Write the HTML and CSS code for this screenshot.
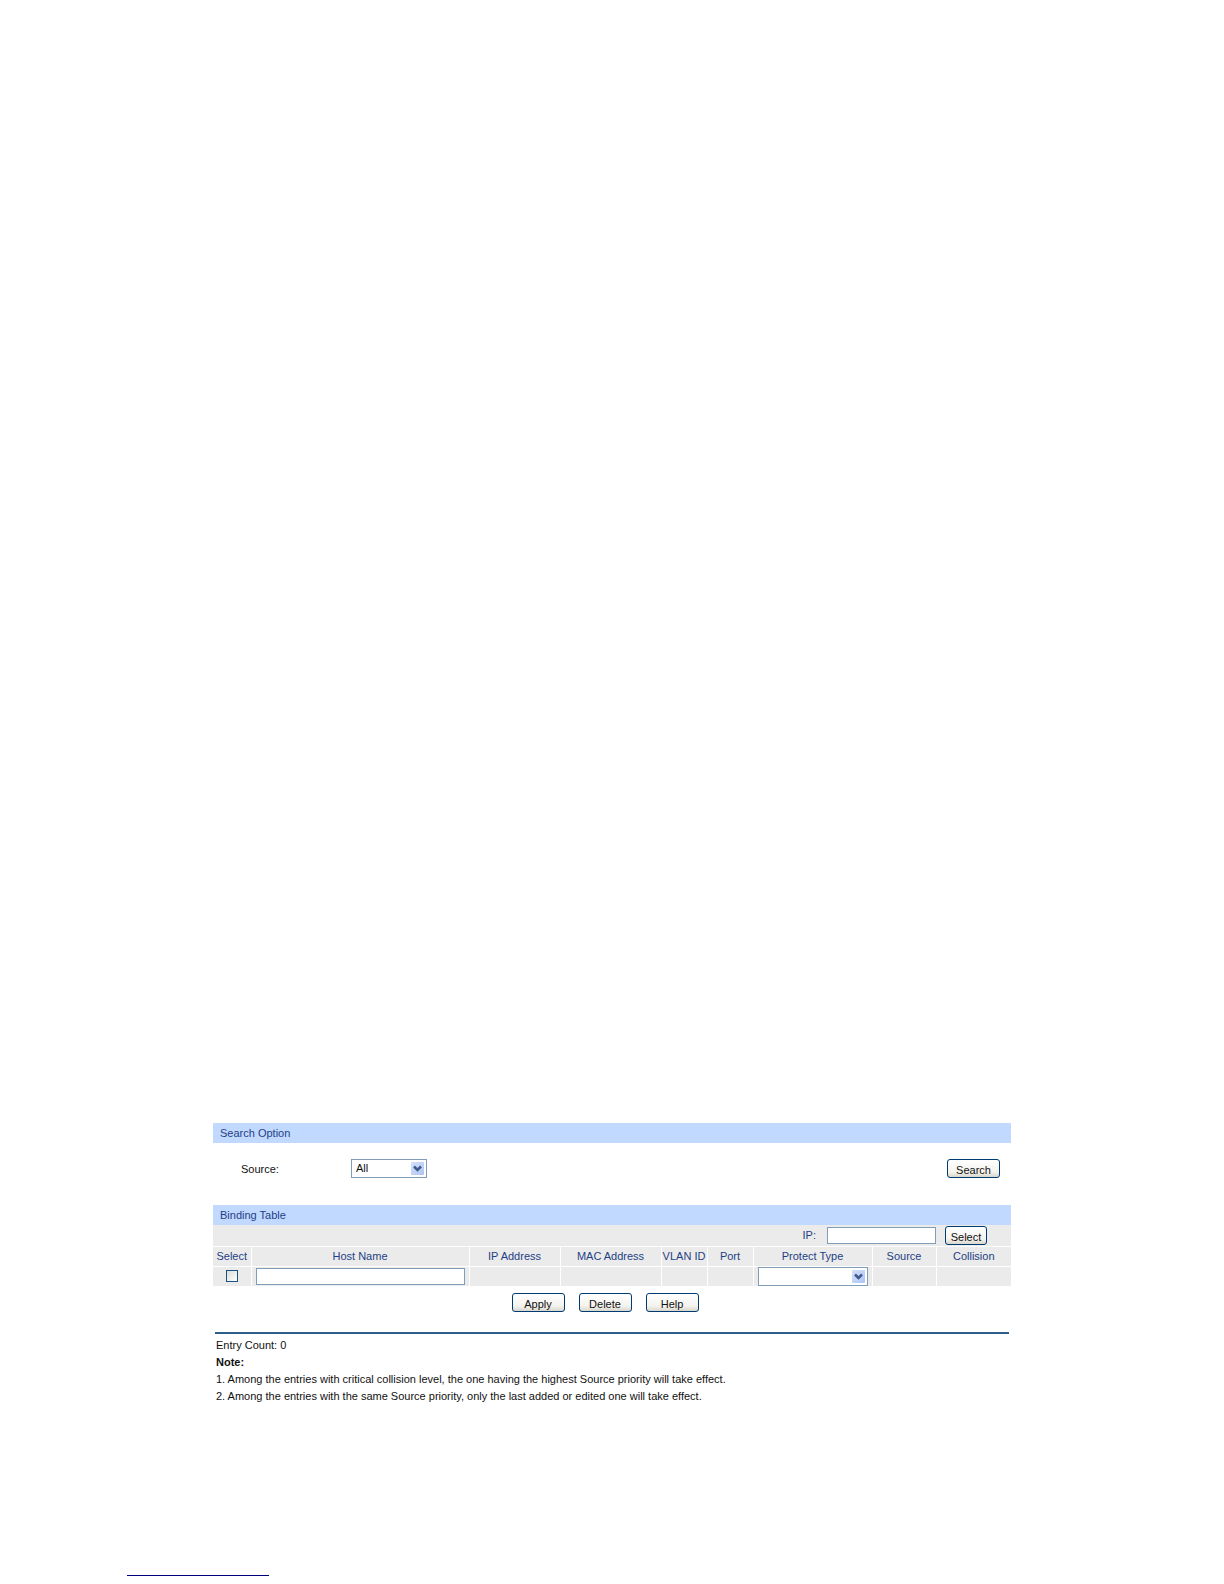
FILE: index.html
```
<!DOCTYPE html>
<html lang="en">

<head>
  <meta charset="UTF-8">
  <meta name="viewport" content="width=device-width, initial-scale=1.0">
  <title>Binding Table</title>
  <link rel="stylesheet" href="styles.css">
</head>

<body>
  <main class="container">
    <!-- Search Option -->
    <form class="search">
      <h2 class="bar">Search Option</h2>
      <div class="search-row">
        <label class="search-label" for="source">Source:</label>
        <span class="select-box source-box">
          <select id="source">
            <option>All</option>
          </select>
          <svg class="arrow" viewBox="0 0 13 13" aria-hidden="true"><path d="M3 4.500l3.500 3.500L10 4.500" /></svg>
        </span>
        <button class="btn search-btn" type="button">Search</button>
      </div>
    </form>

    <!-- Binding Table -->
    <form class="binding">
      <h2 class="bar">Binding Table</h2>
      <div class="ip-row">
        <label for="ip">IP:</label>
        <input class="text-input ip-input" type="text" id="ip">
        <button class="btn select-btn" type="button">Select</button>
      </div>
      <table class="entries">
        <colgroup>
          <col class="col-select">
          <col>
          <col class="col-ip">
          <col class="col-mac">
          <col class="col-small">
          <col class="col-small">
          <col class="col-protect">
          <col class="col-source">
          <col class="col-collision">
        </colgroup>
        <thead>
          <tr>
            <th>Select</th>
            <th>Host Name</th>
            <th>IP Address</th>
            <th>MAC Address</th>
            <th>VLAN ID</th>
            <th>Port</th>
            <th>Protect Type</th>
            <th>Source</th>
            <th>Collision</th>
          </tr>
        </thead>
        <tbody>
          <tr>
            <td><input class="check" type="checkbox" aria-label="Select"></td>
            <td><input class="text-input host-input" type="text" aria-label="Host Name"></td>
            <td></td>
            <td></td>
            <td></td>
            <td></td>
            <td>
              <span class="select-box protect-box">
                <select aria-label="Protect Type">
                  <option></option>
                </select>
                <svg class="arrow" viewBox="0 0 13 13" aria-hidden="true"><path d="M3 4.500l3.500 3.500L10 4.500" /></svg>
              </span>
            </td>
            <td></td>
            <td></td>
          </tr>
        </tbody>
      </table>
      <div class="actions">
        <button class="btn" type="button">Apply</button>
        <button class="btn" type="button">Delete</button>
        <button class="btn" type="button">Help</button>
      </div>
    </form>

    <!-- Notes -->
    <section class="notes">
      <p>Entry Count: 0</p>
      <p><strong>Note:</strong></p>
      <p>1. Among the entries with critical collision level, the one having the highest Source priority will take effect.</p>
      <p>2. Among the entries with the same Source priority, only the last added or edited one will take effect.</p>
    </section>
  </main>
  <footer class="footer">
    <hr class="footer-line">
  </footer>
</body>

</html>
```
FILE: styles.css
```
* {
  box-sizing: border-box;
}

body {
  margin: 0;
  min-height: 100vh;
  display: flex;
  flex-direction: column;
  justify-content: flex-end;
  background: #ffffff;
  color: #111111;
  font-family: "Liberation Sans", Arial, sans-serif;
  font-size: 11px;
}

.container {
  padding: 0 213px;
}

.bar {
  margin: 0;
  padding: 0 7px;
  background: #c1d8ff;
  color: #1e3f85;
  font-size: 11px;
  font-weight: normal;
  line-height: 20px;
}

.search-row {
  display: flex;
  align-items: center;
  height: 62px;
  padding: 0 11px 10px 28px;
}

.search-label {
  width: 110px;
}

.search-btn {
  margin-left: auto;
}

.select-box {
  position: relative;
  display: block;
  height: 19px;
}

.source-box {
  width: 76px;
}

select {
  display: block;
  width: 100%;
  height: 100%;
  padding: 0 18px 2px 4px;
  border: 1px solid #7f9db9;
  border-radius: 0;
  background: #ffffff;
  color: #111111;
  font: inherit;
  appearance: none;
}

.arrow {
  position: absolute;
  top: 3px;
  right: 3px;
  width: 13px;
  height: 13px;
  border-radius: 1px;
  background: linear-gradient(135deg, #d3e0fc, #afc5f4);
  pointer-events: none;
}

.arrow path {
  fill: none;
  stroke: #405a8c;
  stroke-width: 2.5;
}

.btn {
  width: 53px;
  height: 19px;
  padding: 3px 0 0;
  border: 1px solid #003c74;
  border-radius: 3px;
  background: linear-gradient(#ffffff, #f4f3ee 70%, #d9d6cc);
  color: #111111;
  font: inherit;
  line-height: 14px;
}

.text-input {
  height: 17px;
  padding: 0 3px;
  border: 1px solid #7f9db9;
  background: #ffffff;
  font: inherit;
}

.ip-row {
  display: flex;
  align-items: center;
  justify-content: flex-end;
  height: 21px;
  padding-right: 24px;
  background: #ebebeb;
  color: #1e3f85;
}

.ip-input {
  width: 109px;
  margin: 0 9px 0 11px;
}

.select-btn {
  width: 42px;
}

.entries {
  width: 100%;
  table-layout: fixed;
  border-collapse: collapse;
}

.entries th,
.entries td {
  height: 20px;
  padding: 0;
  border-top: 1px solid #ffffff;
  background: #ebebeb;
  color: #1e3f85;
  font-weight: normal;
  line-height: 18px;
  text-align: center;
  white-space: nowrap;
}

.entries th + th,
.entries td + td {
  border-left: 1px solid #ffffff;
}

.col-select {
  width: 38px;
}

.col-ip {
  width: 91px;
}

.col-mac {
  width: 101px;
}

.col-small {
  width: 46px;
}

.col-protect {
  width: 119px;
}

.col-source {
  width: 64px;
}

.col-collision {
  width: 75px;
}

.check {
  display: block;
  width: 12px;
  height: 12px;
  margin: 0 auto;
  border: 1px solid #1c5180;
  background: linear-gradient(135deg, #dcdcd7, #ffffff);
  appearance: none;
}

.check:checked {
  background: #21a121;
}

.host-input {
  display: block;
  width: calc(100% - 8px);
  margin: 0 auto;
}

.protect-box {
  width: 110px;
  margin-left: 4px;
}

.actions {
  display: flex;
  justify-content: center;
  padding: 7px 0 20px;
}

.actions .btn {
  margin-right: 14px;
}

.notes {
  margin: 0 2px;
  padding: 3px 1px 0;
  border-top: 2px solid #2c5f8a;
}

.notes p {
  margin: 0;
  line-height: 17px;
}

.footer {
  padding: 170px 127px 8px;
}

.footer-line {
  width: 142px;
  height: 1px;
  margin: 0;
  border: none;
  background: #00007f;
}
```
